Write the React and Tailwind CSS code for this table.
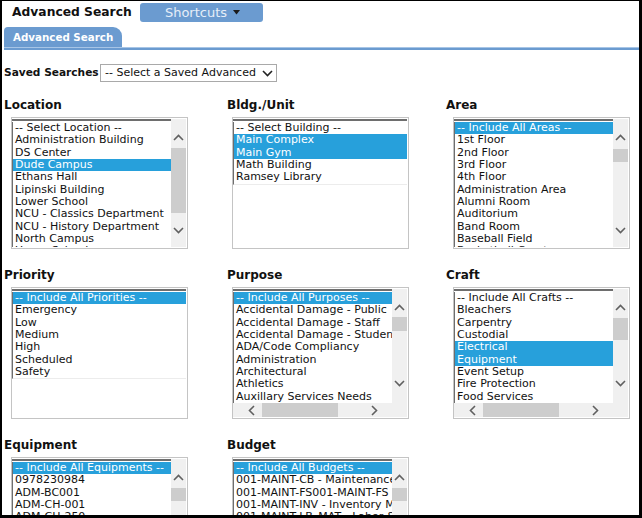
import React from "react";

const FONT = "font-['DejaVu_Sans','Verdana',sans-serif]";

function ChevUp() {
  return (
    <svg width="11" height="7" viewBox="0 0 11 7">
      <polyline points="1,6 5.5,1.5 10,6" fill="none" stroke="#606060" strokeWidth="1.6" />
    </svg>
  );
}
function ChevDown() {
  return (
    <svg width="11" height="7" viewBox="0 0 11 7">
      <polyline points="1,1 5.5,5.5 10,1" fill="none" stroke="#606060" strokeWidth="1.6" />
    </svg>
  );
}
function ChevLeft() {
  return (
    <svg width="7" height="11" viewBox="0 0 7 11">
      <polyline points="6,1 1.5,5.5 6,10" fill="none" stroke="#606060" strokeWidth="1.6" />
    </svg>
  );
}
function ChevRight() {
  return (
    <svg width="7" height="11" viewBox="0 0 7 11">
      <polyline points="1,1 5.5,5.5 1,10" fill="none" stroke="#606060" strokeWidth="1.6" />
    </svg>
  );
}

function VScroll({ thumb, downPad }) {
  return (
    <div className="w-[15px] shrink-0 bg-[#f0f0f0] flex flex-col">
      <div className="h-[28px] shrink-0 pt-[9px] flex items-center justify-center">
        <ChevUp />
      </div>
      <div className={"w-[15px] bg-[#cdcdcd] shrink-0 " + thumb} />
      <div className="flex-1" />
      <div className={"h-[28px] shrink-0 flex items-center justify-center " + downPad}>
        <ChevDown />
      </div>
    </div>
  );
}

function HScroll({ thumb }) {
  return (
    <div className="h-[14px] shrink-0 bg-[#f0f0f0] flex items-center">
      <div className="w-[28px] shrink-0 pl-[8px] flex items-center justify-center">
        <ChevLeft />
      </div>
      <div className={"h-[14px] bg-[#cdcdcd] shrink-0 " + thumb} />
      <div className="flex-1" />
      <div className="w-[28px] shrink-0 pr-[8px] flex items-center justify-center">
        <ChevRight />
      </div>
      <div className="w-[15px] shrink-0" />
    </div>
  );
}

function ListBox({ items, vthumb, vdown, hthumb }) {
  return (
    <div className="w-[177px] h-[132px] border border-[#c4c4c4] bg-white pt-px pr-px pb-px flex flex-col overflow-hidden">
      <div className="flex flex-1 min-h-0">
        <div className="flex-1 min-w-0 overflow-hidden border-t-2 border-[#6e6e6e] pt-px">
          <div className="border-l border-[#6e6e6e] border-b border-b-[#ececec]">
            {items.map(([t, s], i) => (
              <div
                key={i}
                className={
                  "h-[12.33px] leading-[12.33px] text-[11px] pl-[2px] whitespace-nowrap " +
                  (s ? "bg-[#27a0db] text-white" : "text-[#111]")
                }
              >
                {t}
              </div>
            ))}
          </div>
        </div>
        {vthumb && <VScroll thumb={vthumb} downPad={vdown} />}
      </div>
      {hthumb && <HScroll thumb={hthumb} />}
    </div>
  );
}

function Field({ label, children, indent }) {
  return (
    <div>
      <div className="h-[14px] leading-[14px] text-[12px] font-bold text-[#111] whitespace-nowrap">{label}</div>
      <div className={"mt-[5px] " + indent}>{children}</div>
    </div>
  );
}

const L = (arr, sel = []) => arr.map((t, i) => [t, sel.includes(i)]);

export default function App() {
  return (
    <div
      className={
        "w-[642px] h-[518px] bg-white border-t border-l-2 border-r-[3px] border-b-[3px] border-black overflow-hidden " +
        FONT
      }
    >
      {/* header */}
      <div className="h-[21px] flex items-center">
        <div className="ml-[10px] w-[128px] text-[12.3px] font-bold text-[#111] whitespace-nowrap leading-none pt-[2px]">
          Advanced Search
        </div>
        <div className="w-[123px] h-[19px] mt-[1px] rounded-[3px] bg-[#6b9bd0] flex items-center justify-center gap-[6px] pl-[2px]">
          <span className="text-[13px] text-[#e6eef8] leading-none">Shortcuts</span>
          <svg width="7" height="5" viewBox="0 0 7 5">
            <polygon points="0,0 7,0 3.5,4.5" fill="#1a1a1a" />
          </svg>
        </div>
      </div>

      {/* tab */}
      <div className="mt-[5px] ml-[2px] w-[118px] h-[20px] bg-[#6b9bd0] rounded-tl-[4px] rounded-tr-[9px] flex items-center pl-[9px]">
        <span className="text-[10.3px] font-bold text-white leading-none whitespace-nowrap">Advanced Search</span>
      </div>
      <div className="ml-[2px] h-[3px] bg-[#6b9bd0] border-t border-[#a7c5e6]" />

      {/* saved searches */}
      <div className="mt-[14px] ml-[2px] h-[18px] flex items-center">
        <span className="w-[96px] text-[10.6px] font-bold text-[#111] whitespace-nowrap">Saved Searches</span>
        <div className="w-[177px] h-[18px] border border-[#a9a9a9] bg-white flex items-center justify-between pl-[4px] pr-[3px]">
          <span className="text-[11px] text-[#111] whitespace-nowrap">-- Select a Saved Advanced</span>
          <svg width="11" height="7" viewBox="0 0 11 7">
            <polyline points="1,1 5.5,5.5 10,1" fill="none" stroke="#222" strokeWidth="1.6" />
          </svg>
        </div>
      </div>

      {/* grid */}
      <div className="mt-[16px] ml-[2px] grid grid-cols-[223px_219px_1fr] gap-y-[19px]">
        <Field label="Location" indent="ml-[7px]">
          <ListBox
            items={L(
              [
                "-- Select Location --",
                "Administration Building",
                "DS Center",
                "Dude Campus",
                "Ethans Hall",
                "Lipinski Building",
                "Lower School",
                "NCU - Classics Department",
                "NCU - History Department",
                "North Campus",
                "Upper School",
                "West Campus",
              ],
              [3]
            )}
            vthumb="mt-[1px] h-[65px]"
            vdown="pb-[6px]"
          />
        </Field>
        <Field label="Bldg./Unit" indent="ml-[5px]">
          <ListBox
            items={L(["-- Select Building --", "Main Complex", "Main Gym", "Math Building", "Ramsey Library"], [1, 2])}
          />
        </Field>
        <Field label="Area" indent="ml-[7px]">
          <ListBox
            items={L(
              [
                "-- Include All Areas --",
                "1st Floor",
                "2nd Floor",
                "3rd Floor",
                "4th Floor",
                "Administration Area",
                "Alumni Room",
                "Auditorium",
                "Band Room",
                "Baseball Field",
                "Basketball Court",
                "Boiler Room",
              ],
              [0]
            )}
            vthumb="mt-[2px] h-[13px]"
            vdown="pb-[6px]"
          />
        </Field>

        <Field label="Priority" indent="ml-[7px]">
          <ListBox
            items={L(
              ["-- Include All Priorities --", "Emergency", "Low", "Medium", "High", "Scheduled", "Safety"],
              [0]
            )}
          />
        </Field>
        <Field label="Purpose" indent="ml-[5px]">
          <ListBox
            items={L(
              [
                "-- Include All Purposes --",
                "Accidental Damage - Public",
                "Accidental Damage - Staff",
                "Accidental Damage - Student",
                "ADA/Code Compliancy",
                "Administration",
                "Architectural",
                "Athletics",
                "Auxillary Services Needs",
                "Capital Improvement",
              ],
              [0]
            )}
            vthumb="mt-0 h-[14px]"
            vdown="pb-[12px]"
            hthumb="ml-px w-[76px]"
          />
        </Field>
        <Field label="Craft" indent="ml-[7px]">
          <ListBox
            items={L(
              [
                "-- Include All Crafts --",
                "Bleachers",
                "Carpentry",
                "Custodial",
                "Electrical",
                "Equipment",
                "Event Setup",
                "Fire Protection",
                "Food Services",
                "Grounds",
              ],
              [4, 5]
            )}
            vthumb="mt-[1px] h-[22px]"
            vdown="pb-[12px]"
            hthumb="ml-px w-[76px]"
          />
        </Field>

        <Field label="Equipment" indent="ml-[7px]">
          <ListBox
            items={L(
              [
                "-- Include All Equipments --",
                "0978230984",
                "ADM-BC001",
                "ADM-CH-001",
                "ADM-CH-250",
                "ADM-CH-251",
                "ADM-CH-252",
                "ADM-CH-253",
                "ADM-CH-254",
                "ADM-CH-255",
                "ADM-CH-256",
              ],
              [0]
            )}
            vthumb="mt-[1px] h-[13px]"
            vdown="pb-[6px]"
          />
        </Field>
        <Field label="Budget" indent="ml-[5px]">
          <ListBox
            items={L(
              [
                "-- Include All Budgets --",
                "001-MAINT-CB - Maintenance",
                "001-MAINT-FS001-MAINT-FS",
                "001-MAINT-INV - Inventory Management",
                "001-MAINT-LB_MAT - Labor & Material",
                "001-MAINT-OPS - Operations",
                "001-MAINT-PM - Preventive",
                "001-MAINT-SUP - Supplies",
                "001-MAINT-TR - Travel",
                "001-MAINT-UT - Utilities",
                "002-CAP - Capital",
              ],
              [0]
            )}
            vthumb="mt-[1px] h-[13px]"
            vdown="pb-[6px]"
          />
        </Field>
        <div />
      </div>
    </div>
  );
}
